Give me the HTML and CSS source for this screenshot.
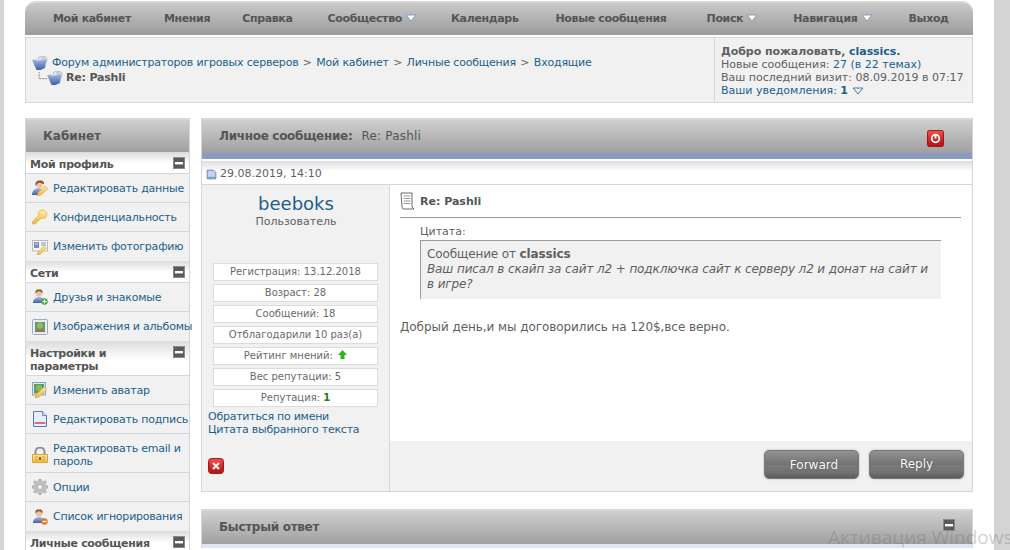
FILE: index.html
```html
<!DOCTYPE html>
<html lang="ru">
<head>
<meta charset="utf-8">
<title>Re: Pashli</title>
<link rel="stylesheet" href="styles.css">
</head>
<body>
<svg class="defs" width="0" height="0" aria-hidden="true">
  <defs>
    <linearGradient id="gBlue" x1="0" y1="0" x2="0" y2="1"><stop offset="0" stop-color="#a9bde2"/><stop offset="1" stop-color="#3f5fa5"/></linearGradient>
    <linearGradient id="gRed" x1="0" y1="0" x2="0" y2="1"><stop offset="0" stop-color="#f05050"/><stop offset="1" stop-color="#b01010"/></linearGradient>
    <linearGradient id="gGold" x1="0" y1="0" x2="0" y2="1"><stop offset="0" stop-color="#ffe9a0"/><stop offset="1" stop-color="#f0b63a"/></linearGradient>
    <symbol id="i-folder" viewBox="0 0 16 14"><path d="M6 2l3-2 5 1 1 2-1 4H7z" fill="#e4e9f2" stroke="#7f8ea8" stroke-width=".5"/><path d="M9 1.500l4 .8M9 3l4 .5" stroke="#8a98b0" stroke-width=".5"/><path d="M0 4l4-.5 1.500 1.500 9-2-1.500 9-4.500 2H4.500z" fill="url(#gBlue)"/></symbol>
    <symbol id="i-doc" viewBox="0 0 14 14"><path d="M1.500 1.500h8l3 3v8h-11z" fill="#c5d3ea" stroke="#4a6aa5"/><path d="M2 10h10v2H2z" fill="#7f9bcc"/></symbol>
    <symbol id="i-power" viewBox="0 0 18 18"><rect x=".5" y=".5" width="17" height="17" rx="2" fill="url(#gRed)" stroke="#a01010"/><circle cx="9" cy="9" r="4" fill="none" stroke="#fff" stroke-width="1.800"/><path d="M9 5v4" stroke="#fff" stroke-width="2"/></symbol>
    <symbol id="i-del" viewBox="0 0 16 16"><rect x=".5" y=".5" width="15" height="15" rx="3" fill="url(#gRed)" stroke="#a01818"/><path d="M5 5l6 6M11 5l-6 6" stroke="#f4e8e8" stroke-width="2.400"/></symbol>
    <symbol id="i-minus" viewBox="0 0 12 12"><rect width="12" height="12" fill="#5a5a5a"/><rect x=".5" y=".5" width="11" height="11" fill="none" stroke="#8a8a8a"/><rect x="2" y="5" width="8" height="2.400" fill="#fff"/></symbol>
    <symbol id="i-note" viewBox="0 0 15 18"><path d="M1 1h11v14l2 2H3l-1-2z" fill="#fff" stroke="#444" stroke-width=".8"/><path d="M3.500 4h7M3.500 6.500h7M3.500 9h7M3.500 11.500h7" stroke="#999"/></symbol>
    <symbol id="i-user-edit" viewBox="0 0 16 16"><path d="M3.500 5.500V2.500L6 .5h4l2 2v2l-2-1-1 1H6L5 5.500z" fill="#8a5a30"/><circle cx="7.500" cy="5.500" r="2.800" fill="#f0c49a"/><path d="M0 15c0-4 3-7 6-7l4 1-3 6z" fill="url(#gBlue)"/><path d="M5 16l1-3.500 7-6.500 3 2.500-7 6.500z" fill="url(#gGold)" stroke="#cf9a2c" stroke-width=".5"/></symbol>
    <symbol id="i-key" viewBox="0 0 16 16"><path d="M10.500 1c2.600 0 4.500 1.900 4.500 4.300S13 9.500 10.500 9.500c-.6 0-1.100-.1-1.500-.3L8 10.500H6.500V12H5v1.500L3 15H.5v-2.500l6-6C6.300 6 6 5.500 6 4.800 6 2.800 8 1 10.500 1z" fill="url(#gGold)" stroke="#dca93c" stroke-width=".6"/><circle cx="11.500" cy="4.300" r="1.100" fill="#fff6d0"/></symbol>
    <symbol id="i-photo" viewBox="0 0 16 16"><rect x=".5" y="1.500" width="15" height="10.500" fill="#f4f4f8" stroke="#b4bccc"/><rect x="2" y="3" width="5" height="6" fill="#6c8fd0"/><circle cx="4.500" cy="4.800" r="1.300" fill="#e9b98a"/><path d="M9 4h5M9 6h5" stroke="#8a96a8"/><path d="M5 16l1-3 6-6 2.500 2-6 6z" fill="url(#gGold)" stroke="#cf9a2c" stroke-width=".5"/></symbol>
    <symbol id="i-friends" viewBox="0 0 16 16"><path d="M3.500 4.500V2l1.500-1.500h4L10.500 2v2.500z" fill="#8a5a30"/><circle cx="7" cy="5" r="2.800" fill="#f0c49a"/><path d="M1 14c0-4 3-6 6-6s6 2 6 6z" fill="url(#gBlue)"/><circle cx="12.500" cy="12.500" r="3.200" fill="#3ea83e"/><path d="M12.500 10.500v4M10.500 12.500h4" stroke="#fff" stroke-width="1.200"/></symbol>
    <symbol id="i-image" viewBox="0 0 16 16"><rect x=".5" y=".5" width="15" height="15" rx="1" fill="#e6ecf6" stroke="#9aacc8"/><rect x="3" y="3" width="10" height="10" fill="#6d9a55"/><circle cx="8" cy="6.500" r="3" fill="#8dba6c"/><path d="M3 11h10v2H3z" fill="#8c7a4a"/></symbol>
    <symbol id="i-avatar" viewBox="0 0 16 16"><rect x=".5" y=".5" width="13" height="12.500" fill="#dfe6f2" stroke="#8ea2c4"/><rect x="2" y="2" width="10" height="9.500" fill="#5f9d52"/><circle cx="7" cy="6" r="3" fill="#82bb6d"/><path d="M3 16l1-3.500 8-7.500 3 2.500-8 7.500z" fill="url(#gGold)" stroke="#cf9a2c" stroke-width=".5"/></symbol>
    <symbol id="i-sign" viewBox="0 0 16 16"><path d="M1.500 .5h9l4 4v11h-13z" fill="#e7edf8" stroke="#5a78b8"/><path d="M10.500 .5v4h4" fill="#cdd8ee" stroke="#5a78b8" stroke-width=".8"/><rect x="2.500" y="11" width="11" height="2" fill="#d8707a"/></symbol>
    <symbol id="i-lock" viewBox="0 0 16 16"><path d="M3.500 8V5a4.500 4.500 0 0 1 9 0v3" fill="none" stroke="#8f8f8f" stroke-width="2"/><rect x=".5" y="7.500" width="15" height="8" fill="url(#gGold)" stroke="#d8a83e"/><path d="M3 10h3M3 13h3M10 10h3M10 13h3" stroke="#c99c3a"/><rect x="7" y="10" width="2" height="3" fill="#8a6a20"/></symbol>
    <symbol id="i-gear" viewBox="0 0 16 16"><path d="M7 0h2l.5 2.300 1.500.6L13 1.700l1.400 1.400-1.200 2 .6 1.500 2.200.4v2l-2.200.5-.6 1.500 1.200 2L13 14.300l-2-1.200-1.500.6L9 16H7l-.5-2.300-1.500-.6-2 1.200L1.600 12.900l1.200-2-.6-1.500L0 9V7l2.200-.4.6-1.500-1.200-2L3 1.700l2 1.200 1.500-.6z" fill="#c0c0c0" stroke="#969696" stroke-width=".5"/><circle cx="8" cy="8" r="2.600" fill="#f1f1f1" stroke="#969696" stroke-width=".6"/></symbol>
    <symbol id="i-ignore" viewBox="0 0 16 16"><path d="M3.500 4.500V2l1.500-1.500h4L10.500 2v2.500z" fill="#8a5a30"/><circle cx="7" cy="5" r="2.800" fill="#f0c49a"/><path d="M1 14c0-4 3-6 6-6s6 2 6 6z" fill="url(#gBlue)"/><circle cx="12.500" cy="12.500" r="3.200" fill="#e8742a"/><path d="M10.500 12.500h4" stroke="#fff" stroke-width="1.400"/></symbol>
    <symbol id="i-arrow" viewBox="0 0 12 8"><path d="M1 1h10L6 7z" fill="#fff" stroke="#7f9ac0"/></symbol>
    <symbol id="i-arrow-o" viewBox="0 0 12 8"><path d="M1 1h10L6 7z" fill="#f1f1f1" stroke="#4a7a9c"/></symbol>
    <symbol id="i-up" viewBox="0 0 9 9"><path d="M4.500 0L9 5H6.500v4h-4V5H0z" fill="#2fb51a"/></symbol>
    <symbol id="i-tree" viewBox="0 0 12 10"><path d="M1.500 0v8.500H12" fill="none" stroke="#333" stroke-dasharray="1 1"/></symbol>
  </defs>
</svg>

<div class="page">
  <nav class="nav">
    <a class="nav-item w1">Мой кабинет</a>
    <a class="nav-item w2">Мнения</a>
    <a class="nav-item w3">Справка</a>
    <a class="nav-item w4">Сообщество<svg class="arrow"><use href="#i-arrow"/></svg></a>
    <a class="nav-item w5">Календарь</a>
    <a class="nav-item w6">Новые сообщения</a>
    <a class="nav-item w7">Поиск<svg class="arrow"><use href="#i-arrow"/></svg></a>
    <a class="nav-item w8">Навигация<svg class="arrow"><use href="#i-arrow"/></svg></a>
    <a class="nav-item w9">Выход</a>
  </nav>

  <header class="crumbs">
    <div class="crumb-left">
      <div class="crumb-line"><svg class="ic-folder"><use href="#i-folder"/></svg><span class="link">Форум администраторов игровых серверов</span><span class="sep">&gt;</span><span class="link">Мой кабинет</span><span class="sep">&gt;</span><span class="link">Личные сообщения</span><span class="sep">&gt;</span><span class="link">Входящие</span></div>
      <div class="crumb-line sub"><svg class="tree"><use href="#i-tree"/></svg><svg class="ic-folder"><use href="#i-folder"/></svg><strong>Re: Pashli</strong></div>
    </div>
    <div class="welcome">
      <div class="w-title">Добро пожаловать, <span class="link">classics.</span></div>
      <div>Новые сообщения: <span class="link">27 (в 22 темах)</span></div>
      <div>Ваш последний визит: 08.09.2019 в 07:17</div>
      <div class="link">Ваши уведомления: <b>1</b> <svg class="arrow"><use href="#i-arrow-o"/></svg></div>
    </div>
  </header>

  <div class="columns">
    <aside class="side">
      <h2 class="bar side-title">Кабинет</h2>
      <h3 class="group">Мой профиль<svg class="minus"><use href="#i-minus"/></svg></h3>
      <a class="row"><svg class="ic16"><use href="#i-user-edit"/></svg><span>Редактировать данные</span></a>
      <a class="row"><svg class="ic16"><use href="#i-key"/></svg><span>Конфиденциальность</span></a>
      <a class="row last"><svg class="ic16"><use href="#i-photo"/></svg><span>Изменить фотографию</span></a>
      <h3 class="group">Сети<svg class="minus"><use href="#i-minus"/></svg></h3>
      <a class="row"><svg class="ic16"><use href="#i-friends"/></svg><span>Друзья и знакомые</span></a>
      <a class="row last"><svg class="ic16"><use href="#i-image"/></svg><span class="nowrap">Изображения и альбомы</span></a>
      <h3 class="group">Настройки и<br>параметры<svg class="minus"><use href="#i-minus"/></svg></h3>
      <a class="row"><svg class="ic16"><use href="#i-avatar"/></svg><span>Изменить аватар</span></a>
      <a class="row"><svg class="ic16"><use href="#i-sign"/></svg><span class="nowrap">Редактировать подпись</span></a>
      <a class="row tall"><svg class="ic16"><use href="#i-lock"/></svg><span>Редактировать email и<br>пароль</span></a>
      <a class="row"><svg class="ic16"><use href="#i-gear"/></svg><span>Опции</span></a>
      <a class="row last"><svg class="ic16"><use href="#i-ignore"/></svg><span>Список игнорирования</span></a>
      <h3 class="group">Личные сообщения<svg class="minus"><use href="#i-minus"/></svg></h3>
    </aside>

    <main class="main">
      <section class="panel">
        <div class="bar main-title"><span><b>Личное сообщение:</b><span class="title-rest">Re: Pashli</span></span><svg class="power"><use href="#i-power"/></svg></div>
        <div class="band"></div>
        <div class="date"><svg class="ic-doc"><use href="#i-doc"/></svg>29.08.2019, 14:10</div>
        <div class="post">
          <div class="author">
            <div class="name">beeboks</div>
            <div class="role">Пользователь</div>
            <ul class="stats">
              <li>Регистрация: 13.12.2018</li>
              <li>Возраст: 28</li>
              <li>Сообщений: 18</li>
              <li>Отблагодарили 10 раз(а)</li>
              <li>Рейтинг мнений: <svg class="up"><use href="#i-up"/></svg></li>
              <li>Вес репутации: 5</li>
              <li>Репутация: <b class="rep">1</b></li>
            </ul>
            <div class="author-links"><div class="link">Обратиться по имени</div><div class="link">Цитата выбранного текста</div></div>
            <svg class="del"><use href="#i-del"/></svg>
          </div>
          <div class="content">
            <div class="message">
              <div class="subject"><svg class="note"><use href="#i-note"/></svg>Re: Pashli</div>
              <div class="quote-wrap">
                <div class="quote-label">Цитата:</div>
                <blockquote class="quote">Сообщение от <b>classics</b><br><i>Ваш писал в скайп за сайт л2 + подключка сайт к серверу л2 и донат на сайт и в игре?</i></blockquote>
              </div>
              <p class="text">Добрый день,и мы договорились на 120$,все верно.</p>
            </div>
            <div class="actions"><button class="btn btn-forward">Forward</button><button class="btn btn-reply">Reply</button></div>
          </div>
        </div>
      </section>

      <section class="panel reply">
        <div class="bar main-title"><b>Быстрый ответ</b><svg class="minus-r"><use href="#i-minus"/></svg></div>
        <div class="band light"></div>
      </section>
    </main>
  </div>
</div>
<div class="watermark">Активация Windows</div>
</body>
</html>
```

FILE: styles.css
```css
* { box-sizing: border-box; }
html, body { height: 100%; overflow: hidden; }
body {
  margin: 0;
  background: #d4d4d4;
  font-family: "DejaVu Sans", Verdana, sans-serif;
  font-size: 11px;
  color: #5f5f5f;
}
svg { display: inline-block; flex: none; }
.defs { position: absolute; }
.page {
  width: 990px;
  margin-left: 4px;
  min-height: 100%;
  background: #fff;
  padding: 1px 21px 0;
}
.link { color: #1c5f8c; }

/* nav */
.nav {
  display: flex;
  align-items: center;
  height: 34px;
  background: linear-gradient(#c9c9c9, #9b9b9b);
  border-top: 2px solid #d8d8d8;
  border-radius: 11px 11px 0 0;
  padding: 0 0 2px 28px;
  font-weight: bold;
  color: #555;
  letter-spacing: -.35px;
}
.nav-item { white-space: nowrap; }
.w2 { margin-left: 33px; }
.w3 { margin-left: 32px; }
.w4 { margin-left: 35px; }
.w5 { margin-left: 34px; }
.w6 { margin-left: 37px; }
.w7 { margin-left: 40px; }
.w8 { margin-left: 35px; }
.w9 { margin-left: 36px; }
.arrow { width: 12px; height: 8px; vertical-align: 0; }
.nav-item .arrow { margin-left: 3px; }

/* breadcrumb */
.crumbs {
  display: flex;
  height: 66px;
  margin-top: 2px;
  background: #f1f1f1;
  border: 1px solid #d5d5de;
}
.crumb-left {
  flex: 1;
  padding-top: 17px;
  padding-left: 6px;
  letter-spacing: -.19px;
}
.crumb-line { display: flex; align-items: center; height: 15px; }
.ic-folder { width: 16px; height: 14px; margin-right: 4px; }
.sep { margin: 0 4.400px; color: #666; }
.crumb-line.sub { padding-left: 6px; }
.crumb-line.sub strong { color: #555; margin-left: 1px; }
.tree { width: 9px; height: 10px; margin-top: -3px; }
.crumb-line.sub .ic-folder { margin-right: 2px; }
.welcome {
  width: 258px;
  border-left: 1px solid #d5d5de;
  padding: 7px 0 0 6px;
  line-height: 13px;
  white-space: nowrap;
}
.w-title { font-weight: bold; letter-spacing: -.06px; }
.welcome .arrow { vertical-align: -1px; }

/* columns */
.columns { display: flex; gap: 11px; margin-top: 15px; }
.bar {
  background: linear-gradient(#cfcfcf, #a0a0a0);
  border-top: 2px solid #d8d8d8;
}
.side { width: 165px; flex: none; border-right: 1px solid #d5d5de; border-left: 1px solid #d5d5de; }
.side-title {
  margin: 0;
  height: 34px;
  padding-left: 17px;
  line-height: 32px;
  font-size: 12px;
  color: #555;
}
.group {
  position: relative;
  margin: 0;
  padding: 6px 22px 2px 4px;
  min-height: 22px;
  font-size: 11px;
  line-height: 13px;
  color: #555;
  letter-spacing: -.3px;
  background: linear-gradient(#dcdcdc, #fff 55%);
  border-bottom: 1px solid #d5d5de;
}
.minus { position: absolute; top: 5px; right: 4px; width: 12px; height: 12px; }
.row {
  display: flex;
  align-items: center;
  gap: 4px;
  height: 29px;
  padding-left: 6px;
  background: #f1f1f1;
  border-bottom: 1px solid #d5d5de;
  color: #1c5f8c;
  line-height: 13px;
  letter-spacing: -.22px;
}
.row.tall { height: 39px; padding-top: 3px; }
.row.last { border-bottom: 0; }
.row .ic16 { width: 16px; height: 16px; margin-right: 1px; }
.nowrap { white-space: nowrap; }

/* main */
.main { width: 772px; flex: none; }
.panel { border-right: 1px solid #d5d5de; border-left: 1px solid #d5d5de; }
.main-title {
  display: flex;
  align-items: center;
  justify-content: space-between;
  height: 35px;
  padding: 0 28px 2px 17px;
  font-size: 12px;
  color: #555;
}
.main-title b { font-size: 12px; letter-spacing: -.3px; }
.title-rest { margin-left: 9px; letter-spacing: .2px; }
.power { width: 17px; height: 17px; margin-top: 6px; }
.band { height: 6px; background: #8a9bc1; }
.band.light { height: 4px; background: #dfe6f3; }
.date {
  display: flex;
  align-items: center;
  gap: 3px;
  height: 24px;
  margin-top: 2px;
  padding: 1px 0 0 4px;
  background: linear-gradient(#dcdcdc, #fff 45%);
  border-bottom: 1px solid #d5d5de;
}
.ic-doc { width: 11px; height: 11px; margin-top: 3px; }
.post { display: flex; height: 307px; border-bottom: 1px solid #d5d5de; }
.author {
  width: 188px;
  flex: none;
  background: #f1f1f1;
  border-right: 1px solid #d5d5de;
  padding: 8px 0 0 6px;
}
.name { text-align: center; font-size: 18px; line-height: 21px; color: #1c5f8c; padding-right: 5px; }
.role { text-align: center; padding-right: 5px; line-height: 14px; margin-top: 1px; }
.stats {
  list-style: none;
  margin: 34px 0 0 5px;
  padding: 0;
  width: 165px;
}
.stats li {
  height: 18px;
  margin-bottom: 3px;
  background: #fff;
  border: 1px solid #dcdcdc;
  text-align: center;
  font-size: 10px;
  line-height: 16px;
  color: #6a6a6a;
}
.up { width: 9px; height: 9px; margin-left: 2px; }
.rep { color: #1a7d1a; }
.author-links { line-height: 13px; margin-top: 1px; letter-spacing: -.25px; }
.del { display: block; width: 16px; height: 16px; margin-top: 22px; }
.content { flex: 1; display: flex; flex-direction: column; }
.message { height: 256px; padding: 0 11px 0 10px; }
.subject {
  display: flex;
  align-items: center;
  gap: 5px;
  height: 33px;
  font-weight: bold;
  color: #555;
  border-bottom: 1px solid #999;
}
.note { width: 15px; height: 18px; }
.quote-wrap { padding: 7px 20px 0; }
.quote-label { line-height: 14px; }
.quote {
  margin: 1px 0 0;
  padding: 6px 6px 6px;
  height: 59px;
  background: #f1f1f1;
  border-top: 1px solid #999;
  border-left: 1px solid #999;
  font-size: 12px;
  line-height: 15px;
  letter-spacing: -.12px;
}
.text { margin: 21px 0 0; font-size: 12px; line-height: 15px; letter-spacing: -.06px; }
.actions {
  flex: 1;
  display: flex;
  justify-content: flex-end;
  gap: 10px;
  padding: 9px 8px 0 0;
  background: #f1f1f1;
}
.btn {
  width: 95px;
  height: 29px;
  padding: 0;
  border: 1px solid #777;
  border-radius: 5px;
  background: linear-gradient(#929292, #727272 50%, #7b7b7b 52%, #707070 80%, #5c5c5c);
  box-shadow: 0 0 2px #aaa;
  color: #fff;
  font-family: inherit;
  font-size: 12px;
  text-shadow: 0 0 1px #333;
}
.btn-forward { padding-left: 5px; }
.btn-reply { padding-bottom: 2px; }
.reply { margin-top: 17px; }
.minus-r { width: 12px; height: 12px; margin: -3px -11px 0 0; }
.watermark {
  position: absolute;
  top: 524px;
  left: 828px;
  white-space: nowrap;
  font-family: "Open Sans", sans-serif;
  font-size: 19px;
  color: rgba(110, 110, 110, .32);
}
```
